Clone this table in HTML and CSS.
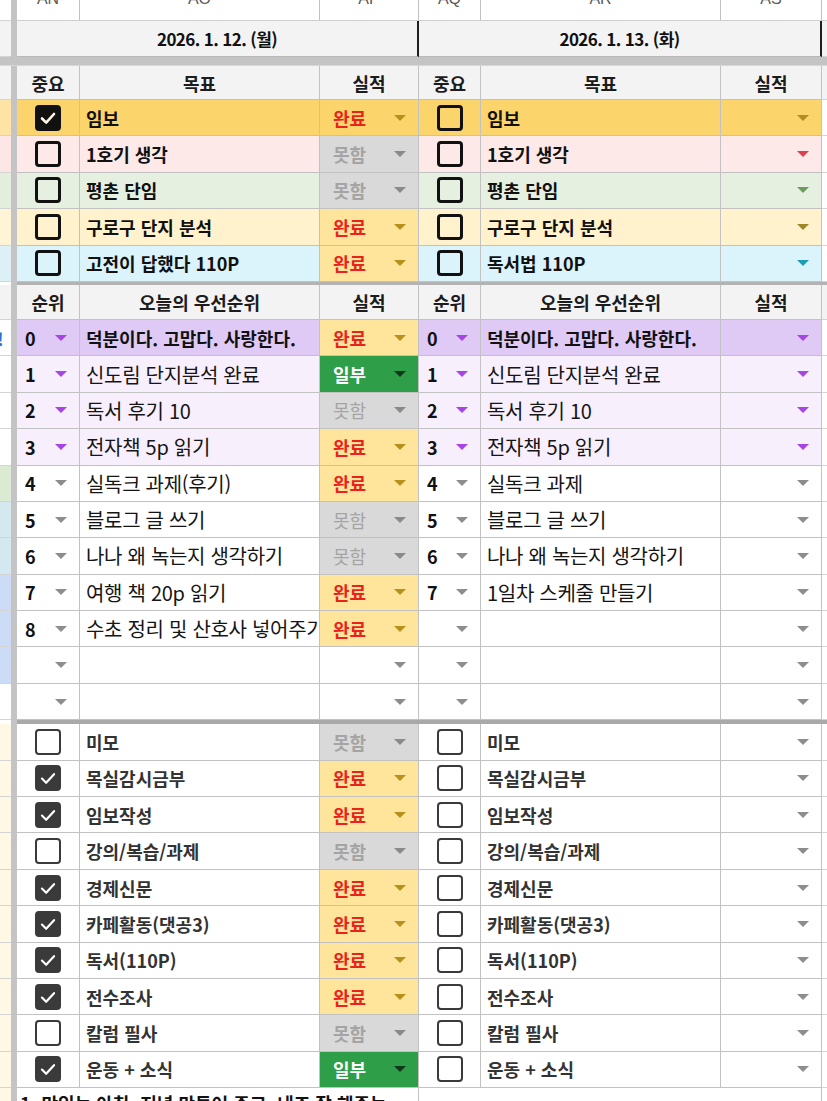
FILE: index.html
```html
<!DOCTYPE html>
<html lang="ko">
<head>
<meta charset="utf-8">
<title>일일 목표</title>
<link rel="stylesheet" href="styles.css">
</head>
<body>
<div class="sheet">
  <div class="row colhdr">
    <div class="s"></div><div class="fz"></div>
    <div class="c ch"><span>AN</span></div>
    <div class="c ch"><span>AO</span></div>
    <div class="c ch"><span>AP</span></div>
    <div class="c ch"><span>AQ</span></div>
    <div class="c ch"><span>AR</span></div>
    <div class="c ch"><span>AS</span></div>
    <div class="n"></div>
  </div>

  <div class="row daterow">
    <div class="s sg"></div><div class="fz"></div>
    <div class="c date">2026. 1. 12. (월)</div>
    <div class="c date">2026. 1. 13. (화)</div>
    <div class="n sg"></div>
  </div>

  <div class="fzbar"></div>

  <div class="row hdr">
    <div class="s sg"></div><div class="fz"></div>
    <div class="c h">중요</div><div class="c h">목표</div><div class="c h">실적</div>
    <div class="c h">중요</div><div class="c h">목표</div><div class="c h">실적</div>
    <div class="n sg"></div>
  </div>

  <!-- goals -->
  <div class="row goal gold">
    <div class="s s-gold"></div><div class="fz"></div>
    <div class="c ck"><span class="cb on"><svg viewBox="0 0 20 20"><path d="M4 10.5l4.2 4.2L16 6"/></svg></span></div>
    <div class="c t b">임보</div>
    <div class="c st done inherit"><span>완료</span><i class="dd"></i></div>
    <div class="c ck"><span class="cb"></span></div>
    <div class="c t b">임보</div>
    <div class="c st empty a-gold"><i class="dd"></i></div>
    <div class="n"></div>
  </div>
  <div class="row goal pink">
    <div class="s s-pink"></div><div class="fz"></div>
    <div class="c ck"><span class="cb"></span></div>
    <div class="c t b">1호기 생각</div>
    <div class="c st fail"><span>못함</span><i class="dd"></i></div>
    <div class="c ck"><span class="cb"></span></div>
    <div class="c t b">1호기 생각</div>
    <div class="c st empty a-red"><i class="dd"></i></div>
    <div class="n"></div>
  </div>
  <div class="row goal green">
    <div class="s s-green"></div><div class="fz"></div>
    <div class="c ck"><span class="cb"></span></div>
    <div class="c t b">평촌 단임</div>
    <div class="c st fail"><span>못함</span><i class="dd"></i></div>
    <div class="c ck"><span class="cb"></span></div>
    <div class="c t b">평촌 단임</div>
    <div class="c st empty a-green"><i class="dd"></i></div>
    <div class="n"></div>
  </div>
  <div class="row goal cream">
    <div class="s s-cream"></div><div class="fz"></div>
    <div class="c ck"><span class="cb"></span></div>
    <div class="c t b">구로구 단지 분석</div>
    <div class="c st done"><span>완료</span><i class="dd"></i></div>
    <div class="c ck"><span class="cb"></span></div>
    <div class="c t b">구로구 단지 분석</div>
    <div class="c st empty a-olive"><i class="dd"></i></div>
    <div class="n"></div>
  </div>
  <div class="row goal cyan">
    <div class="s s-cyan"></div><div class="fz"></div>
    <div class="c ck"><span class="cb"></span></div>
    <div class="c t b">고전이 답했다 110P</div>
    <div class="c st done"><span>완료</span><i class="dd"></i></div>
    <div class="c ck"><span class="cb"></span></div>
    <div class="c t b">독서법 110P</div>
    <div class="c st empty a-teal"><i class="dd"></i></div>
    <div class="n"></div>
  </div>

  <div class="row sep3"><div class="s"></div><div class="fz"></div><div class="line"></div></div>

  <!-- priorities -->
  <div class="row phdr">
    <div class="s sg"></div><div class="fz"></div>
    <div class="c h">순위</div><div class="c h">오늘의 우선순위</div><div class="c h">실적</div>
    <div class="c h">순위</div><div class="c h">오늘의 우선순위</div><div class="c h">실적</div>
    <div class="n sg"></div>
  </div>

  <div class="row prio lav">
    <div class="s"><span class="tail">!</span></div><div class="fz"></div>
    <div class="c rk pu"><b>0</b><i class="dd"></i></div>
    <div class="c t b">덕분이다. 고맙다. 사랑한다.</div>
    <div class="c st done"><span>완료</span><i class="dd"></i></div>
    <div class="c rk pu"><b>0</b><i class="dd"></i></div>
    <div class="c t b">덕분이다. 고맙다. 사랑한다.</div>
    <div class="c st empty pu"><i class="dd"></i></div>
    <div class="n"></div>
  </div>
  <div class="row prio lav2">
    <div class="s"></div><div class="fz"></div>
    <div class="c rk pu"><b>1</b><i class="dd"></i></div>
    <div class="c t r">신도림 단지분석 완료</div>
    <div class="c st part"><span>일부</span><i class="dd"></i></div>
    <div class="c rk pu"><b>1</b><i class="dd"></i></div>
    <div class="c t r">신도림 단지분석 완료</div>
    <div class="c st empty pu"><i class="dd"></i></div>
    <div class="n"></div>
  </div>
  <div class="row prio lav2">
    <div class="s"></div><div class="fz"></div>
    <div class="c rk pu"><b>2</b><i class="dd"></i></div>
    <div class="c t r">독서 후기 10</div>
    <div class="c st fail r"><span>못함</span><i class="dd"></i></div>
    <div class="c rk pu"><b>2</b><i class="dd"></i></div>
    <div class="c t r">독서 후기 10</div>
    <div class="c st empty pu"><i class="dd"></i></div>
    <div class="n"></div>
  </div>
  <div class="row prio lav2">
    <div class="s"></div><div class="fz"></div>
    <div class="c rk pu"><b>3</b><i class="dd"></i></div>
    <div class="c t r">전자책 5p 읽기</div>
    <div class="c st done"><span>완료</span><i class="dd"></i></div>
    <div class="c rk pu"><b>3</b><i class="dd"></i></div>
    <div class="c t r">전자책 5p 읽기</div>
    <div class="c st empty pu"><i class="dd"></i></div>
    <div class="n"></div>
  </div>
  <div class="row prio">
    <div class="s s-green2"></div><div class="fz"></div>
    <div class="c rk"><b>4</b><i class="dd"></i></div>
    <div class="c t r">실독크 과제(후기)</div>
    <div class="c st done"><span>완료</span><i class="dd"></i></div>
    <div class="c rk"><b>4</b><i class="dd"></i></div>
    <div class="c t r">실독크 과제</div>
    <div class="c st empty"><i class="dd"></i></div>
    <div class="n"></div>
  </div>
  <div class="row prio">
    <div class="s s-cyan2"></div><div class="fz"></div>
    <div class="c rk"><b>5</b><i class="dd"></i></div>
    <div class="c t r">블로그 글 쓰기</div>
    <div class="c st fail r"><span>못함</span><i class="dd"></i></div>
    <div class="c rk"><b>5</b><i class="dd"></i></div>
    <div class="c t r">블로그 글 쓰기</div>
    <div class="c st empty"><i class="dd"></i></div>
    <div class="n"></div>
  </div>
  <div class="row prio">
    <div class="s s-cyan2"></div><div class="fz"></div>
    <div class="c rk"><b>6</b><i class="dd"></i></div>
    <div class="c t r">나나 왜 녹는지 생각하기</div>
    <div class="c st fail r"><span>못함</span><i class="dd"></i></div>
    <div class="c rk"><b>6</b><i class="dd"></i></div>
    <div class="c t r">나나 왜 녹는지 생각하기</div>
    <div class="c st empty"><i class="dd"></i></div>
    <div class="n"></div>
  </div>
  <div class="row prio">
    <div class="s s-blue"></div><div class="fz"></div>
    <div class="c rk"><b>7</b><i class="dd"></i></div>
    <div class="c t r">여행 책 20p 읽기</div>
    <div class="c st done"><span>완료</span><i class="dd"></i></div>
    <div class="c rk"><b>7</b><i class="dd"></i></div>
    <div class="c t r">1일차 스케줄 만들기</div>
    <div class="c st empty"><i class="dd"></i></div>
    <div class="n"></div>
  </div>
  <div class="row prio">
    <div class="s s-blue"></div><div class="fz"></div>
    <div class="c rk"><b>8</b><i class="dd"></i></div>
    <div class="c t r">수초 정리 및 산호사 넣어주기</div>
    <div class="c st done"><span>완료</span><i class="dd"></i></div>
    <div class="c rk empty"><i class="dd"></i></div>
    <div class="c t r"></div>
    <div class="c st empty"><i class="dd"></i></div>
    <div class="n"></div>
  </div>
  <div class="row prio">
    <div class="s s-blue"></div><div class="fz"></div>
    <div class="c rk empty"><i class="dd"></i></div>
    <div class="c t r"></div>
    <div class="c st empty"><i class="dd"></i></div>
    <div class="c rk empty"><i class="dd"></i></div>
    <div class="c t r"></div>
    <div class="c st empty"><i class="dd"></i></div>
    <div class="n"></div>
  </div>
  <div class="row prio">
    <div class="s"></div><div class="fz"></div>
    <div class="c rk empty"><i class="dd"></i></div>
    <div class="c t r"></div>
    <div class="c st empty"><i class="dd"></i></div>
    <div class="c rk empty"><i class="dd"></i></div>
    <div class="c t r"></div>
    <div class="c st empty"><i class="dd"></i></div>
    <div class="n"></div>
  </div>

  <div class="row sep4"><div class="s"></div><div class="fz"></div><div class="line"></div></div>

  <!-- checklist -->
  <div class="row cl">
    <div class="s s-ivory"></div><div class="fz"></div>
    <div class="c ck"><span class="cb"></span></div>
    <div class="c t m">미모</div>
    <div class="c st fail"><span>못함</span><i class="dd"></i></div>
    <div class="c ck"><span class="cb"></span></div>
    <div class="c t m">미모</div>
    <div class="c st empty"><i class="dd"></i></div>
    <div class="n"></div>
  </div>
  <div class="row cl">
    <div class="s s-ivory"></div><div class="fz"></div>
    <div class="c ck"><span class="cb on"><svg viewBox="0 0 20 20"><path d="M4.5 10.5l3.8 3.8L15.5 6.5"/></svg></span></div>
    <div class="c t m">목실감시금부</div>
    <div class="c st done"><span>완료</span><i class="dd"></i></div>
    <div class="c ck"><span class="cb"></span></div>
    <div class="c t m">목실감시금부</div>
    <div class="c st empty"><i class="dd"></i></div>
    <div class="n"></div>
  </div>
  <div class="row cl">
    <div class="s s-ivory"></div><div class="fz"></div>
    <div class="c ck"><span class="cb on"><svg viewBox="0 0 20 20"><path d="M4.5 10.5l3.8 3.8L15.5 6.5"/></svg></span></div>
    <div class="c t m">임보작성</div>
    <div class="c st done"><span>완료</span><i class="dd"></i></div>
    <div class="c ck"><span class="cb"></span></div>
    <div class="c t m">임보작성</div>
    <div class="c st empty"><i class="dd"></i></div>
    <div class="n"></div>
  </div>
  <div class="row cl">
    <div class="s s-ivory"></div><div class="fz"></div>
    <div class="c ck"><span class="cb"></span></div>
    <div class="c t m">강의/복습/과제</div>
    <div class="c st fail"><span>못함</span><i class="dd"></i></div>
    <div class="c ck"><span class="cb"></span></div>
    <div class="c t m">강의/복습/과제</div>
    <div class="c st empty"><i class="dd"></i></div>
    <div class="n"></div>
  </div>
  <div class="row cl">
    <div class="s s-ivory"></div><div class="fz"></div>
    <div class="c ck"><span class="cb on"><svg viewBox="0 0 20 20"><path d="M4.5 10.5l3.8 3.8L15.5 6.5"/></svg></span></div>
    <div class="c t m">경제신문</div>
    <div class="c st done"><span>완료</span><i class="dd"></i></div>
    <div class="c ck"><span class="cb"></span></div>
    <div class="c t m">경제신문</div>
    <div class="c st empty"><i class="dd"></i></div>
    <div class="n"></div>
  </div>
  <div class="row cl">
    <div class="s s-ivory"></div><div class="fz"></div>
    <div class="c ck"><span class="cb on"><svg viewBox="0 0 20 20"><path d="M4.5 10.5l3.8 3.8L15.5 6.5"/></svg></span></div>
    <div class="c t m">카페활동(댓공3)</div>
    <div class="c st done"><span>완료</span><i class="dd"></i></div>
    <div class="c ck"><span class="cb"></span></div>
    <div class="c t m">카페활동(댓공3)</div>
    <div class="c st empty"><i class="dd"></i></div>
    <div class="n"></div>
  </div>
  <div class="row cl">
    <div class="s s-ivory"></div><div class="fz"></div>
    <div class="c ck"><span class="cb on"><svg viewBox="0 0 20 20"><path d="M4.5 10.5l3.8 3.8L15.5 6.5"/></svg></span></div>
    <div class="c t m">독서(110P)</div>
    <div class="c st done"><span>완료</span><i class="dd"></i></div>
    <div class="c ck"><span class="cb"></span></div>
    <div class="c t m">독서(110P)</div>
    <div class="c st empty"><i class="dd"></i></div>
    <div class="n"></div>
  </div>
  <div class="row cl">
    <div class="s s-ivory"></div><div class="fz"></div>
    <div class="c ck"><span class="cb on"><svg viewBox="0 0 20 20"><path d="M4.5 10.5l3.8 3.8L15.5 6.5"/></svg></span></div>
    <div class="c t m">전수조사</div>
    <div class="c st done"><span>완료</span><i class="dd"></i></div>
    <div class="c ck"><span class="cb"></span></div>
    <div class="c t m">전수조사</div>
    <div class="c st empty"><i class="dd"></i></div>
    <div class="n"></div>
  </div>
  <div class="row cl">
    <div class="s s-ivory"></div><div class="fz"></div>
    <div class="c ck"><span class="cb"></span></div>
    <div class="c t m">칼럼 필사</div>
    <div class="c st fail"><span>못함</span><i class="dd"></i></div>
    <div class="c ck"><span class="cb"></span></div>
    <div class="c t m">칼럼 필사</div>
    <div class="c st empty"><i class="dd"></i></div>
    <div class="n"></div>
  </div>
  <div class="row cl">
    <div class="s s-ivory"></div><div class="fz"></div>
    <div class="c ck"><span class="cb on"><svg viewBox="0 0 20 20"><path d="M4.5 10.5l3.8 3.8L15.5 6.5"/></svg></span></div>
    <div class="c t m">운동 + 소식</div>
    <div class="c st part"><span>일부</span><i class="dd"></i></div>
    <div class="c ck"><span class="cb"></span></div>
    <div class="c t m">운동 + 소식</div>
    <div class="c st empty"><i class="dd"></i></div>
    <div class="n"></div>
  </div>

  <div class="row last">
    <div class="s s-ivory"></div><div class="fz"></div>
    <div class="c note">1. 맛있는 아침, 저녁 만들어 주고, 내조 잘 해주는</div>
    <div class="c note2"></div>
    <div class="n"></div>
  </div>
</div>
</body>
</html>
```

FILE: styles.css
```css
* { box-sizing: border-box; margin: 0; padding: 0; }
html, body { width: 827px; height: 1101px; overflow: hidden; background: #fff; }
body {
  font-family: "Noto Sans CJK KR", "Noto Sans", sans-serif;
  color: #111;
}

.sheet { display: flex; flex-direction: column; width: 827px; }

.row {
  display: grid;
  grid-template-columns: 11px 6px 63px 240px 99px 62px 240px 101px 1fr;
  height: 36.4px;
  --bg: #fff;
}

.s { background: #fff; border-bottom: 1px solid #d4d4d4; display: flex; align-items: center; overflow: hidden; }
.fz { background: #c4c4c4; }
.n { background: #fff; border-bottom: 1px solid #d4d4d4; }
.sg { background: #f3f3f3; }

.c {
  background: var(--bg);
  border-right: 1px solid #c2c2c2;
  border-bottom: 1px solid #c2c2c2;
  display: flex;
  align-items: center;
  overflow: hidden;
  white-space: nowrap;
  min-width: 0;
}

/* column letters */
.colhdr { height: 21px; }
.ch {
  justify-content: center;
  align-items: flex-start;
  color: #5a5a5a;
  font-family: "Liberation Sans", Arial, sans-serif;
  font-size: 16px;
  border-bottom-color: #cfcfcf;
}
.ch span { margin-top: -9px; line-height: 16px; }

/* date */
.daterow { height: 36px; }
.date {
  grid-column: span 3;
  justify-content: center;
  background: #f3f3f3;
  font-weight: 700;
  font-size: 17px;
  letter-spacing: -0.6px;
  border-right: 2px solid #1e1e1e;
  border-bottom-color: #b8b8b8;
}

.fzbar { height: 9px; background: #c4c4c4; border-bottom: 1px solid #d8d8d8; }

/* header rows */
.hdr { height: 34px; }
.phdr { height: 35px; }
.h {
  justify-content: center;
  background: #f3f3f3;
  font-weight: 700;
  font-size: 18px;
  color: #1c1c1c;
}

/* separators */
.sep3 { height: 3px; }
.sep4 { height: 4px; }
.sep3 .s, .sep4 .s { border: 0; }
.line { grid-column: 3 / 10; background: #b3b3b3; }
.sep4 .line { background: #a9a9a9; }

/* row colours */
.gold { --bg: #fcd46c; }
.pink { --bg: #fde9e8; }
.green { --bg: #e6f0e1; }
.cream { --bg: #fff2cd; }
.cyan { --bg: #dbf3fa; }
.lav { --bg: #dfcaf5; }
.lav2 { --bg: #f8effd; }

.s-gold { background: #fde3a4; }
.s-pink { background: #fde6e6; }
.s-green { background: #e4eedd; }
.s-cream { background: #fff4d6; }
.s-cyan { background: #dcf0f6; }
.s-green2 { background: #dbead3; }
.s-cyan2 { background: #d3e9ef; }
.s-blue { background: #cddcf6; }
.s-ivory { background: #fff8e4; }

.tail { color: #2f6ed8; font-weight: 700; font-size: 18px; margin-left: -3px; }

/* text cells */
.t { padding-left: 6px; }
.t.b { font-weight: 700; font-size: 18px; color: #111; }
.t.r { font-weight: 400; font-size: 20px; color: #151515; letter-spacing: -0.3px; }
.t.m { font-weight: 700; font-size: 18px; color: #333; }

/* checkbox */
.ck { justify-content: center; }
.cb {
  width: 26px;
  height: 26px;
  border: 3px solid #111;
  border-radius: 4px;
  display: block;
}
.cb.on { background: #111; }
.cb svg { display: block; width: 100%; height: 100%; }
.cb svg path {
  fill: none;
  stroke: #fff8e8;
  stroke-width: 2.6;
  stroke-linecap: round;
  stroke-linejoin: round;
}
.cl .cb { border: 2.5px solid #3a3a3a; }
.cl .cb.on { background: #3a3a3a; }
.cl .cb svg path { stroke: #fff; stroke-width: 2; }

/* dropdown triangle */
.dd {
  display: block;
  width: 0;
  height: 0;
  border-left: 6px solid transparent;
  border-right: 6px solid transparent;
  border-top: 6px solid var(--arrow, #8d8d8d);
  flex: none;
}

/* status cells */
.st {
  justify-content: space-between;
  padding: 0 12px 0 13px;
  font-weight: 700;
  font-size: 18px;
}
.st.empty { justify-content: flex-end; }
.done { background: #ffe49b; color: #e8231b; --arrow: #b6911c; }
.done.inherit { background: var(--bg); }
.fail { background: #d9d9d9; color: #a4a4a4; --arrow: #8a8a8a; }
.fail.r { font-weight: 400; font-size: 18px; }
.part { background: #2f9e49; color: #fff; --arrow: #10381b; }

.a-gold { --arrow: #b08c22; }
.a-red { --arrow: #d9434d; }
.a-green { --arrow: #6c9c5d; }
.a-olive { --arrow: #9f8524; }
.a-teal { --arrow: #1f9db5; }
.pu { --arrow: #a745e4; }

/* rank cells */
.rk {
  justify-content: space-between;
  padding: 0 12px 0 8px;
  font-size: 18px;
}
.rk b { font-weight: 700; color: #111; }
.rk.empty { justify-content: flex-end; }

/* last row */
.last { height: 40px; }
.note {
  grid-column: span 3;
  align-items: flex-start;
  padding: 2px 0 0 3px;
  font-weight: 700;
  font-size: 18px;
  color: #111;
  border-bottom: 0;
  overflow: visible;
}
.note2 { grid-column: span 3; border-bottom: 0; }
```
